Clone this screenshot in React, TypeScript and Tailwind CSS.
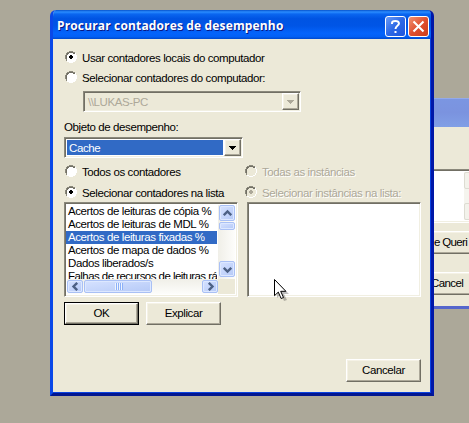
import React from "react";

const raised =
  "border border-t-white border-l-white border-r-[#716f64] border-b-[#716f64] shadow-[inset_-1px_-1px_0_#aca899,inset_1px_1px_0_#f5f2e6] bg-[#ece9d8]";
const sunken =
  "border border-t-[#8a887b] border-l-[#8a887b] border-r-white border-b-white shadow-[inset_1px_1px_0_#716f64,inset_-1px_-1px_0_#f1efe2]";

function Radio({ checked, disabled, children, className = "" }: { checked?: boolean; disabled?: boolean; children: React.ReactNode; className?: string }) {
  return (
    <div className={`flex h-4 items-center ${disabled ? "text-[#aca899] [text-shadow:1px_1px_0_#fff]" : ""} ${className}`}>
      <svg width="12" height="12" viewBox="0 0 12 12" shapeRendering="crispEdges" className="mr-[5px] shrink-0">
        <path d="M4 1h4v1h2v2h1v4h-1v2H8v1H4v-1H2V8H1V4h1V2h2z" fill={disabled ? "#ece9d8" : "#fff"} />
        <path d="M4 0h4v1H4zM2 1h2v1H2zM8 1h2v1H8zM1 2h1v2H1zM0 4h1v4H0zM1 8h1v2H1z" fill="#8a887b" />
        <path d="M4 1h4v1H4zM2 2h2v1H2zM8 2h2v1H8zM2 3h1v1H2zM1 4h1v4H1z" fill="#716f64" />
        <path d="M10 2h1v2h-1zM11 4h1v4h-1zM10 8h1v2h-1zM8 10h2v1H8zM4 11h4v1H4zM2 10h2v1H2z" fill="#fff" />
        {checked && <path d="M5 4h2v1h1v2H7v1H5V7H4V5h1z" fill={disabled ? "#aca899" : "#000"} />}
      </svg>
      <span className="pt-px whitespace-nowrap">{children}</span>
    </div>
  );
}

function Button({ children, primary }: { children: React.ReactNode; primary?: boolean }) {
  return (
    <div className={`h-[23px] w-[75px] shrink-0 ${primary ? "border border-black" : ""}`}>
      <div className={`flex h-full w-full items-center justify-center pb-px ${raised}`}>{children}</div>
    </div>
  );
}

function Combo({ value, disabled, className }: { value: string; disabled?: boolean; className: string }) {
  return (
    <div className={`flex h-[21px] p-px ${sunken} ${disabled ? "bg-[#ece9d8]" : "bg-white"} ${className}`}>
      <div className={`m-px flex flex-1 items-center pl-[2px] ${disabled ? "text-[#aca899]" : "bg-[#316ac5] text-white"}`}>{value}</div>
      <div className={`flex w-[17px] items-center justify-center ${raised}`}>
        <svg width="7" height="4" viewBox="0 0 7 4" shapeRendering="crispEdges">
          <path d="M0 0h7v1H6v1H5v1H4v1H3V3H2V2H1V1H0z" fill={disabled ? "#aca899" : "#000"} />
        </svg>
      </div>
    </div>
  );
}

const scrollFace =
  "flex items-center justify-center rounded-[2px] border border-[#a9c0f5] bg-linear-to-br from-[#d6e2ff] to-[#b5c9f7] shadow-[inset_0_0_0_1px_#dde8ff]";

function Arrow({ d }: { d: string }) {
  return (
    <svg width="9" height="9" viewBox="0 0 9 9" className="shrink-0">
      <path d={d} fill="none" stroke="#4d6185" strokeWidth="2.4" />
    </svg>
  );
}

const counters = [
  "Acertos de leituras de cópia %",
  "Acertos de leituras de MDL %",
  "Acertos de leituras fixadas %",
  "Acertos de mapa de dados %",
  "Dados liberados/s",
  "Falhas de recursos de leituras rá",
];

function CounterList() {
  return (
    <div className={`flex h-[95px] w-[174px] flex-col bg-white p-0.5 ${sunken}`}>
      <div className="flex h-[74px] shrink-0">
        <div className="-ml-px w-[153px] overflow-hidden">
          {counters.map((label, i) => (
            <div
              key={label}
              className={`h-[13px] pl-[2px] leading-[13px] whitespace-nowrap ${i === 2 ? "bg-[#316ac5] text-white" : ""} ${i === 5 ? "tracking-[-0.55px]" : ""}`}
            >
              {label}
            </div>
          ))}
        </div>
        <div className="ml-px flex w-[17px] flex-col bg-linear-to-r from-[#f0efe8] to-[#fdfdfb] pl-px">
          <div className={`h-[16px] shrink-0 ${scrollFace}`}><Arrow d="M0.8 6.2 4.5 2.5 8.2 6.2" /></div>
          <div className={`mt-px h-[8px] shrink-0 ${scrollFace}`} />
          <div className={`mt-auto mb-[2px] h-[16px] shrink-0 ${scrollFace}`}><Arrow d="M0.8 2.8 4.5 6.5 8.2 2.8" /></div>
        </div>
      </div>
      <div className="flex h-[17px]">
        <div className="flex w-[153px] bg-linear-to-b from-[#f0efe8] to-[#fdfdfb] py-px">
          <div className={`w-[16px] shrink-0 ${scrollFace}`}><Arrow d="M6.2 0.8 2.5 4.5 6.2 8.2" /></div>
          <div className={`ml-px w-[68px] shrink-0 ${scrollFace}`}>
            {[0, 1, 2, 3].map((i) => (
              <span key={i} className="h-[7px] w-px bg-[#eef4fe] shadow-[1px_0_0_#8cb0f8] not-last:mr-px" />
            ))}
          </div>
          <div className={`ml-auto w-[16px] shrink-0 ${scrollFace}`}><Arrow d="M2.8 0.8 6.5 4.5 2.8 8.2" /></div>
        </div>
        <div className="w-[17px] bg-[#ece9d8]" />
      </div>
    </div>
  );
}

function BackgroundWindow() {
  return (
    <div className="absolute top-[98px] left-[300px] flex h-[211px] w-[190px] flex-col overflow-hidden border-b-[3px] border-[#5566cc] bg-[#ece9d8]">
      <div className="h-[29px] shrink-0 bg-linear-to-b from-[#7b96e2] via-[#7b93df] to-[#819fe6] shadow-[inset_0_1px_0_#93a9ea]" />
      <div className={`mt-[42px] flex h-[54px] w-[185px] shrink-0 justify-end bg-white p-0.5 ${sunken}`}>
        <div className="flex w-[18px] flex-col justify-between bg-[#f5f4ee]">
          {[0, 1].map((i) => (
            <div key={i} className="h-[17px] rounded-[2px] border border-[#dddcd2] bg-[#f3f2eb]" />
          ))}
        </div>
      </div>
      <div className={`mt-[8px] ml-[90px] flex h-[23px] w-[90px] shrink-0 items-center pb-px pl-[43px] tracking-[-0.65px] whitespace-nowrap ${raised}`}>e Queri</div>
      <div className={`mt-[18px] ml-[110px] flex h-[23px] w-[75px] shrink-0 items-center pb-px pl-[20px] tracking-[-0.6px] ${raised}`}>Cancel</div>
    </div>
  );
}

function Dialog() {
  return (
    <div className="absolute top-[10px] left-[50px] flex h-[386px] w-[384px] flex-col overflow-hidden rounded-t-[6px] border-r-[3px] border-b-[3px] border-l-[3px] border-r-[#0017a8] border-b-[#001590] border-l-[#0a48e8] bg-[#ece9d8] shadow-[inset_0_-1px_0_#0842e0,inset_-1px_0_0_#0842e0]">
      <div className="-mx-[3px] flex h-[29px] shrink-0 items-center bg-[linear-gradient(180deg,#0753cc_0%,#2a8cff_7%,#0a66f0_14%,#0054e3_30%,#0055e6_55%,#0464fc_80%,#0260f5_92%,#0048cc_100%)] pt-[3px] pr-[5px] pl-[7px]">
        <span className="font-['Open_Sans',sans-serif] text-[12px] leading-4 font-bold tracking-[0.15px] whitespace-nowrap text-white [text-shadow:1px_1px_0_#0a1883]">
          Procurar contadores de desempenho
        </span>
        <div className="ml-auto flex gap-[2px]">
          <div className="flex h-[21px] w-[21px] items-center justify-center rounded-[3px] border border-white bg-linear-to-br from-[#6b9bf5] via-[#2c68e6] to-[#1f55dc]">
            <svg width="13" height="15" viewBox="0 0 13 15" fill="none" stroke="#fff" strokeWidth="2">
              <path d="M3 5V4Q3 2 6.3 2T10 4.3C10 7 6.5 6.5 6.5 10M6.5 12v2" />
            </svg>
          </div>
          <div className="flex h-[21px] w-[21px] items-center justify-center rounded-[3px] border border-white bg-linear-to-br from-[#f09070] via-[#e05030] to-[#cc3c18]">
            <svg width="13" height="13" viewBox="0 0 13 13" stroke="#fff" strokeWidth="2.1">
              <path d="M1.5 1.5l10 10M11.5 1.5l-10 10" />
            </svg>
          </div>
        </div>
      </div>
      <div className="flex flex-1 flex-col pl-[11px]">
        <Radio checked className="mt-[10px] ml-px">Usar contadores locais do computador</Radio>
        <Radio className="mt-[4px] ml-px">Selecionar contadores do computador:</Radio>
        <Combo disabled value="\\LUKAS-PC" className="mt-[6px] ml-[19px] w-[218px]" />
        <div className="mt-[7px] h-4 leading-4">Objeto de desempenho:</div>
        <Combo value="Cache" className="mt-[2px] w-[179px]" />
        <div className="mt-[5px] flex gap-[9px]">
          <div className="w-[174px]">
            <Radio className="ml-px">Todos os contadores</Radio>
            <Radio checked className="mt-[5px] mb-[2px] ml-px">Selecionar contadores na lista</Radio>
            <CounterList />
          </div>
          <div className="w-[174px]">
            <Radio disabled className="-ml-[2px]">Todas as instâncias</Radio>
            <Radio checked disabled className="mt-[5px] mb-[2px] -ml-[2px]">Selecionar instâncias na lista:</Radio>
            <div className={`h-[95px] w-[174px] bg-white ${sunken}`} />
          </div>
        </div>
        <div className="mt-[5px] flex gap-[7px]">
          <Button primary>OK</Button>
          <Button>Explicar</Button>
        </div>
        <div className="mt-[34px] mr-[10px] flex justify-end">
          <Button>Cancelar</Button>
        </div>
      </div>
    </div>
  );
}

export default function App() {
  return (
    <div className="relative h-[423px] w-[469px] overflow-hidden bg-[#aca899] font-['Liberation_Sans',sans-serif] text-[11.5px] leading-4 tracking-[-0.4px] text-black">
      <BackgroundWindow />
      <Dialog />
      <svg className="absolute top-[278px] left-[273px]" width="18" height="24" viewBox="0 0 18 24">
        <path d="M4 4v16l4-4 3 7 3-1-3-6h5z" fill="#000" opacity=".25" />
        <path d="M1.5 1.5v16.2l3.8-3.6 2.8 6.4 2.4-1-2.8-6.2h5.2z" fill="#fff" stroke="#000" />
      </svg>
    </div>
  );
}
